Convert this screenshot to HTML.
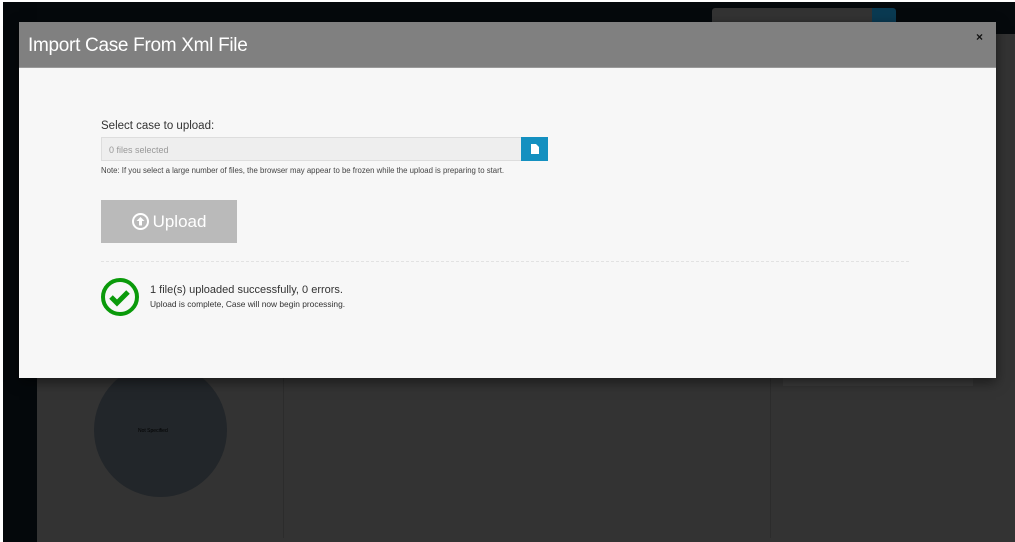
<!DOCTYPE html>
<html><head><style>
*{margin:0;padding:0;box-sizing:border-box}
body{width:1015px;height:542px;background:#fff;position:relative;overflow:hidden;font-family:"Liberation Sans",sans-serif}
.abs{position:absolute}
</style></head><body>
<div class="abs" style="left:3px;top:2px;width:1012px;height:540px;background:#333"></div>
<div class="abs" style="left:3px;top:2px;width:1012px;height:32px;background:#05090c"></div>
<div class="abs" style="left:3px;top:2px;width:34px;height:540px;background:#04080b"></div>
<div class="abs" style="left:712px;top:8px;width:160px;height:18px;background:#333;border-radius:3px 0 0 3px"></div>
<div class="abs" style="left:872px;top:8px;width:24px;height:18px;background:#0a3a52;border-radius:0 3px 3px 0"></div>
<div class="abs" style="left:283px;top:378px;width:1px;height:160px;background:#2c2c2c"></div>
<div class="abs" style="left:770px;top:378px;width:1px;height:160px;background:#2c2c2c"></div>
<div class="abs" style="left:783px;top:378px;width:190px;height:8px;background:#3a3a3a"></div>
<div class="abs" style="left:94px;top:363px;width:133px;height:134px;border-radius:50%;background:#22262a"></div>
<div class="abs" style="left:138px;top:428px;font-size:5px;color:#000">Not Specified</div>
<div class="abs" style="left:19px;top:22px;width:977px;height:356px;background:#f7f7f7;box-shadow:0 4px 12px rgba(0,0,0,.5)">
 <div style="height:46px;background:#808080;border-bottom:1px solid #9a9a9a;position:relative">
  <div class="abs" style="left:9px;top:13px;font-size:19px;color:#fff;letter-spacing:-0.3px">Import Case From Xml File</div>
  <div class="abs" style="left:957px;top:8px;font-size:12px;font-weight:bold;color:#111">×</div>
 </div>
 <div class="abs" style="left:82px;top:98px;font-size:11.5px;color:#333">Select case to upload:</div>
 <div class="abs" style="left:82px;top:115px;width:421px;height:24px;background:#eee;border:1px solid #ddd;font-size:9px;color:#999;padding:7px 7px">0 files selected</div>
 <div class="abs" style="left:502px;top:115px;width:27px;height:24px;background:#1490c0">
  <svg width="27" height="24"><path d="M10 7h5l3 3v7h-8z" fill="#fff"/></svg></div>
 <div class="abs" style="left:82px;top:144px;font-size:7.8px;color:#444">Note: If you select a large number of files, the browser may appear to be frozen while the upload is preparing to start.</div>
 <div class="abs" style="left:82px;top:178px;width:136px;height:43px;background:#bababa;color:#fff;font-size:17px;display:flex;align-items:center;justify-content:center;gap:4px">
  <svg width="17" height="17"><circle cx="8.5" cy="8.5" r="7.5" fill="none" stroke="#fff" stroke-width="2"/><path d="M8.5 4l4 4h-2.5v4.5h-3v-4.5h-2.5z" fill="#fff"/></svg>Upload</div>
 <div class="abs" style="left:82px;top:239px;width:808px;border-top:1px dashed #e2e2e2"></div>
 <svg class="abs" style="left:80px;top:256px" width="42" height="42"><circle cx="21" cy="19" r="17" fill="none" stroke="#0a9a0a" stroke-width="4"/><path d="M12 19l6 6 11-11" fill="none" stroke="#0a9a0a" stroke-width="5"/></svg>
 <div class="abs" style="left:131px;top:262px;font-size:11px;color:#333">1 file(s) uploaded successfully, 0 errors.</div>
 <div class="abs" style="left:131px;top:277px;font-size:8.4px;color:#333">Upload is complete, Case will now begin processing.</div>
</div>
</body></html>
